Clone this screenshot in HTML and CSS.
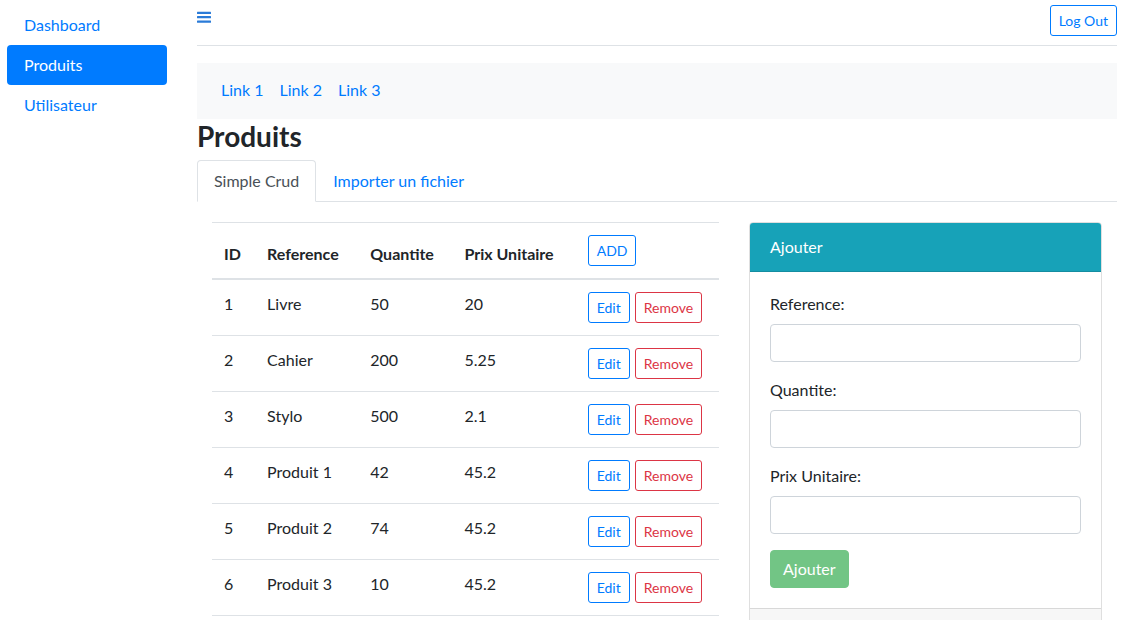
FILE: index.html
```html
<!DOCTYPE html>
<html lang="fr">
<head>
<meta charset="utf-8">
<title>Produits</title>
<link rel="stylesheet" href="styles.css">
</head>
<body>
<div class="app">
  <aside class="sidebar">
    <a class="side-link" href="#">Dashboard</a>
    <a class="side-link active" href="#">Produits</a>
    <a class="side-link" href="#">Utilisateur</a>
  </aside>
  <main class="main">
    <div class="topbar">
      <svg class="burger" width="14" height="12" viewBox="0 0 14 12"><rect x="0" y="0.8" width="14" height="2.2" rx="0.5" fill="#2a7bd8"/><rect x="0" y="5" width="14" height="2.2" rx="0.5" fill="#2a7bd8"/><rect x="0" y="9.6" width="14" height="2.2" rx="0.5" fill="#2a7bd8"/></svg>
      <button class="btn btn-sm btn-outline-primary">Log Out</button>
    </div>
    <hr class="divider">
    <nav class="linkbar">
      <a href="#">Link 1</a>
      <a href="#">Link 2</a>
      <a href="#">Link 3</a>
    </nav>
    <h3 class="title">Produits</h3>
    <div class="tabs">
      <a class="tab active" href="#">Simple Crud</a>
      <a class="tab" href="#">Importer un fichier</a>
    </div>
    <div class="content">
      <div class="col-left">
        <table class="table">
          <colgroup><col class="c1"><col class="c2"><col class="c3"><col class="c4"><col class="c5"></colgroup>
          <thead>
            <tr><th>ID</th><th>Reference</th><th>Quantite</th><th>Prix Unitaire</th><th><button class="btn btn-sm btn-outline-primary">ADD</button></th></tr>
          </thead>
          <tbody>
            <tr><td>1</td><td>Livre</td><td>50</td><td>20</td><td><div class="actions"><button class="btn btn-sm btn-outline-primary">Edit</button><button class="btn btn-sm btn-outline-danger">Remove</button></div></td></tr>
            <tr><td>2</td><td>Cahier</td><td>200</td><td>5.25</td><td><div class="actions"><button class="btn btn-sm btn-outline-primary">Edit</button><button class="btn btn-sm btn-outline-danger">Remove</button></div></td></tr>
            <tr><td>3</td><td>Stylo</td><td>500</td><td>2.1</td><td><div class="actions"><button class="btn btn-sm btn-outline-primary">Edit</button><button class="btn btn-sm btn-outline-danger">Remove</button></div></td></tr>
            <tr><td>4</td><td>Produit 1</td><td>42</td><td>45.2</td><td><div class="actions"><button class="btn btn-sm btn-outline-primary">Edit</button><button class="btn btn-sm btn-outline-danger">Remove</button></div></td></tr>
            <tr><td>5</td><td>Produit 2</td><td>74</td><td>45.2</td><td><div class="actions"><button class="btn btn-sm btn-outline-primary">Edit</button><button class="btn btn-sm btn-outline-danger">Remove</button></div></td></tr>
            <tr><td>6</td><td>Produit 3</td><td>10</td><td>45.2</td><td><div class="actions"><button class="btn btn-sm btn-outline-primary">Edit</button><button class="btn btn-sm btn-outline-danger">Remove</button></div></td></tr>
          </tbody>
        </table>
      </div>
      <div class="col-right">
        <div class="card">
          <div class="card-header">Ajouter</div>
          <div class="card-body">
            <div class="form-group"><label>Reference:</label><input class="form-control" type="text"></div>
            <div class="form-group"><label>Quantite:</label><input class="form-control" type="text"></div>
            <div class="form-group"><label>Prix Unitaire:</label><input class="form-control" type="text"></div>
            <button class="btn btn-success" disabled>Ajouter</button>
          </div>
          <div class="card-footer"></div>
        </div>
      </div>
    </div>
  </main>
</div>
</body>
</html>
```

FILE: styles.css
```css
* { box-sizing: border-box; }
html, body { margin: 0; padding: 0; }
body {
  font-family: Lato, "Open Sans", sans-serif;
  font-size: 16px;
  line-height: 24px;
  color: #212529;
  background: #fff;
}
a { color: #007bff; text-decoration: none; }

.app { display: flex; align-items: flex-start; }

.sidebar {
  width: 197px;
  flex: none;
  padding: 5px 30px 0 7px;
  display: flex;
  flex-direction: column;
}
.side-link {
  display: block;
  padding: 8px 17px;
  border-radius: 4px;
  color: #007bff;
}
.side-link.active { background: #007bff; color: #fff; }

.main { width: 920px; flex: none; }

.topbar {
  display: flex;
  justify-content: space-between;
  align-items: flex-start;
  padding-top: 5px;
}
.burger { margin-top: 6px; display: block; }

.divider {
  border: 0;
  border-top: 1px solid #dee2e6;
  margin: 9px 0 17px;
  height: 0;
}

.linkbar {
  background: #f8f9fa;
  padding: 8px 16px;
  display: flex;
}
.linkbar a { padding: 7px 8px 9px; line-height: 24px; }

.title {
  font-size: 28px;
  font-weight: 700;
  line-height: 34px;
  margin: 0 0 7px;
}

.tabs {
  display: flex;
  border-bottom: 1px solid #dee2e6;
}
.tab {
  padding: 8px 16px;
  border: 1px solid transparent;
  border-top-left-radius: 4px;
  border-top-right-radius: 4px;
  margin-bottom: -1px;
  color: #007bff;
}
.tab.active {
  color: #495057;
  border-color: #dee2e6 #dee2e6 #fff;
  background: #fff;
}

.content { display: flex; padding-top: 20px; }
.col-left { width: 537px; padding: 0 15px; flex: none; }
.col-right { width: 383px; padding: 0 15px; flex: none; }

.table {
  width: 100%;
  border-collapse: collapse;
  table-layout: fixed;
}
.table .c1 { width: 43px; }
.table .c2 { width: 103px; }
.table .c3 { width: 94px; }
.table .c4 { width: 123px; }
.table .c5 { width: 143px; }
.table th, .table td {
  padding: 12px;
  text-align: left;
  vertical-align: top;
  border-top: 1px solid #dee2e6;
  white-space: nowrap;
}
.table th { font-weight: 700; vertical-align: bottom; }
.table thead th { border-bottom: 2px solid #dee2e6; }
.table tbody tr:last-child td { border-bottom: 1px solid #dee2e6; }

.actions { display: flex; gap: 5px; }

.btn {
  font-family: inherit;
  display: inline-block;
  vertical-align: middle;
  background: transparent;
  border: 1px solid transparent;
  border-radius: 4px;
  padding: 6px 12px;
  font-size: 16px;
  line-height: 24px;
  cursor: pointer;
}
.btn-sm {
  padding: 4px 8px;
  font-size: 14px;
  line-height: 21px;
  border-radius: 3px;
}
.btn-outline-primary { color: #007bff; border-color: #007bff; }
.btn-outline-danger { color: #dc3545; border-color: #dc3545; }
.btn-success {
  color: #fff;
  background: #28a745;
  border-color: #28a745;
  opacity: 0.65;
  cursor: default;
}

.card {
  border: 1px solid rgba(0,0,0,.125);
  border-radius: 4px;
  overflow: hidden;
}
.card-header {
  background: #17a2b8;
  color: #fff;
  padding: 12px 20px;
  border-bottom: 1px solid rgba(0,0,0,.125);
}
.card-body { padding: 20px; }
.form-group { margin-bottom: 16px; }
.form-group label { display: block; margin-bottom: 8px; }
.form-control {
  display: block;
  width: 100%;
  height: 38px;
  border: 1px solid #ced4da;
  border-radius: 4px;
  padding: 6px 12px;
  font-family: inherit;
  font-size: 16px;
  background: #fff;
}
.card-footer {
  height: 40px;
  background: rgba(0,0,0,.03);
  border-top: 1px solid rgba(0,0,0,.125);
}
```
